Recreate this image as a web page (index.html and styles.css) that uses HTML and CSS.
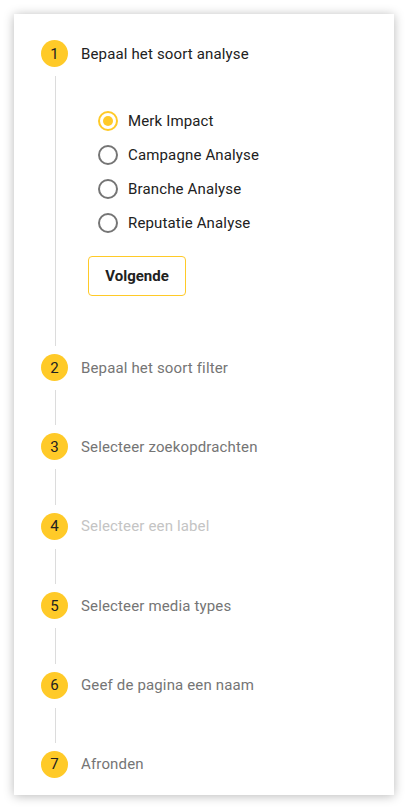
FILE: index.html
```html
<!DOCTYPE html>
<html lang="nl">
<head>
    <meta charset="UTF-8">
    <meta name="viewport" content="width=device-width, initial-scale=1.0">
    <title>Nieuwe analyse</title>
    <link rel="stylesheet" href="styles.css">
</head>
<body>

<div class="stepper">
    <div class="step">
        <div class="step-header">
            <span class="step-icon">1</span>
            <span class="step-label active">Bepaal het soort analyse</span>
        </div>
        <div class="step-body open">
            <div class="radio-group">
                <label class="radio-row">
                    <span class="radio checked"></span>
                    <span>Merk Impact</span>
                </label>
                <label class="radio-row">
                    <span class="radio"></span>
                    <span>Campagne Analyse</span>
                </label>
                <label class="radio-row">
                    <span class="radio"></span>
                    <span>Branche Analyse</span>
                </label>
                <label class="radio-row">
                    <span class="radio"></span>
                    <span>Reputatie Analyse</span>
                </label>
            </div>
            <button class="next-btn" type="button">Volgende</button>
        </div>
    </div>

    <div class="step">
        <div class="step-header">
            <span class="step-icon">2</span>
            <span class="step-label">Bepaal het soort filter</span>
        </div>
        <div class="step-body"></div>
    </div>

    <div class="step">
        <div class="step-header">
            <span class="step-icon">3</span>
            <span class="step-label">Selecteer zoekopdrachten</span>
        </div>
        <div class="step-body"></div>
    </div>

    <div class="step">
        <div class="step-header">
            <span class="step-icon">4</span>
            <span class="step-label disabled">Selecteer een label</span>
        </div>
        <div class="step-body"></div>
    </div>

    <div class="step">
        <div class="step-header">
            <span class="step-icon">5</span>
            <span class="step-label">Selecteer media types</span>
        </div>
        <div class="step-body"></div>
    </div>

    <div class="step">
        <div class="step-header">
            <span class="step-icon">6</span>
            <span class="step-label">Geef de pagina een naam</span>
        </div>
        <div class="step-body"></div>
    </div>

    <div class="step">
        <div class="step-header">
            <span class="step-icon">7</span>
            <span class="step-label">Afronden</span>
        </div>
    </div>
</div>

</body>
</html>
```

FILE: styles.css
```css
body {
    font-family: Roboto, "Noto Sans", Arial, sans-serif;
    margin: 0;
    padding: 14px;
    background-color: #fff;
    color: #212121;
}

.stepper {
    width: 380px;
    box-sizing: border-box;
    padding: 26px 27px 17px;
    background: white;
    box-shadow: 0 1px 10px rgba(0, 0, 0, 0.28);
}

.step-header {
    display: flex;
    align-items: center;
    height: 27px;
}

.step-icon {
    width: 27px;
    height: 27px;
    border-radius: 50%;
    background-color: #ffca28;
    color: #212121;
    font-size: 15px;
    display: flex;
    justify-content: center;
    align-items: center;
    flex-shrink: 0;
}

.step-label {
    margin-left: 13px;
    font-size: 15px;
    letter-spacing: 0.15px;
    color: #757575;
}

.step-label.active {
    color: #212121;
}

.step-label.disabled {
    color: #c4c4c4;
}

.step-body {
    margin: 9px 0 8px 14px;
    height: 35.4px;
    border-left: 1px solid #dcdcdc;
}

.step-body.open {
    height: auto;
    padding: 28px 0 50px 32px;
}

.radio-group {
    margin-left: 10px;
}

.radio-row {
    display: flex;
    align-items: center;
    height: 34px;
    font-size: 15px;
    letter-spacing: 0.15px;
    color: #212121;
    cursor: pointer;
}

.radio {
    width: 20px;
    height: 20px;
    box-sizing: border-box;
    border: 2px solid #757575;
    border-radius: 50%;
    margin-right: 10px;
    display: flex;
    justify-content: center;
    align-items: center;
}

.radio.checked {
    border-color: #ffca28;
}

.radio.checked::after {
    content: "";
    width: 10px;
    height: 10px;
    border-radius: 50%;
    background-color: #ffca28;
}

.next-btn {
    display: block;
    margin-top: 16px;
    width: 98px;
    height: 40px;
    font-family: inherit;
    font-size: 15px;
    font-weight: bold;
    color: #212121;
    background: white;
    border: 1px solid #ffca28;
    border-radius: 4px;
    cursor: pointer;
}
```
